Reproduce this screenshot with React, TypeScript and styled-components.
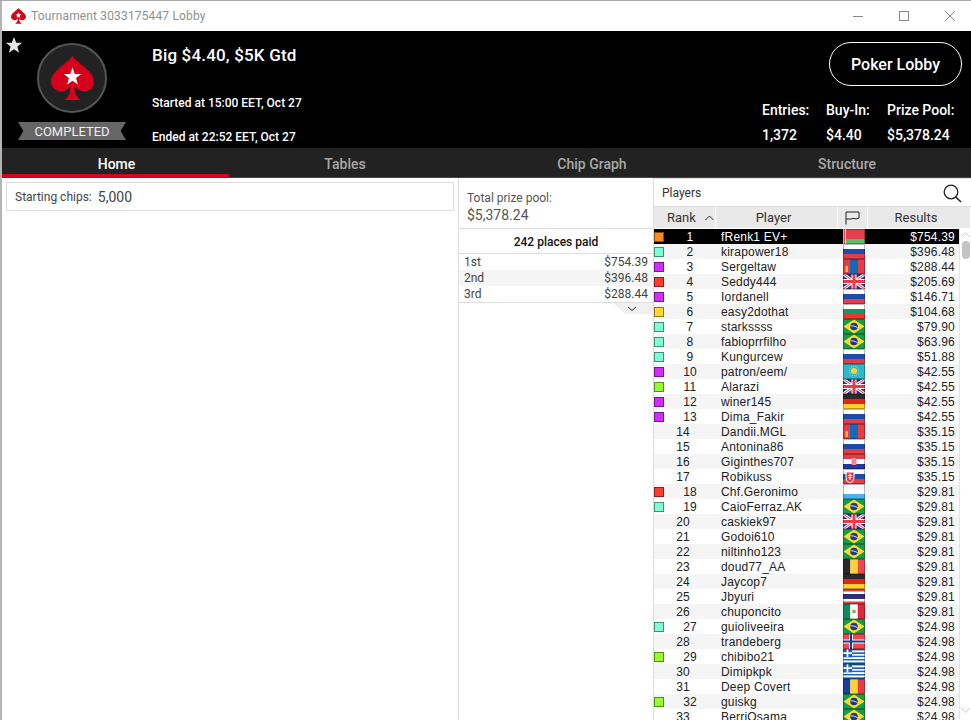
import React, {FC} from 'react';
import styled, {createGlobalStyle} from 'styled-components';

type FlagName = 'by' | 'ru' | 'mn' | 'gb' | 'bg' | 'br' | 'kz' | 'de' | 'hr' | 'sk' | 'ar' | 'be' | 'th' | 'mx' | 'no' | 'gr' | 'ro';

type PlayerType = {
    name: string
    prize: string
    flag: FlagName
    marker?: string
}

const AQUA = '#7fffd4';
const PURPLE = '#d22eff';
const RED = '#ff3b30';
const GREEN = '#98ff2e';
const ORANGE = '#ff8a1e';
const YELLOW = '#ffd633';

const players: PlayerType[] = [
    {name: 'fRenk1 EV+', prize: '$754.39', flag: 'by', marker: ORANGE},
    {name: 'kirapower18', prize: '$396.48', flag: 'ru', marker: AQUA},
    {name: 'Sergeltaw', prize: '$288.44', flag: 'mn', marker: PURPLE},
    {name: 'Seddy444', prize: '$205.69', flag: 'gb', marker: RED},
    {name: 'Iordanell', prize: '$146.71', flag: 'ru', marker: PURPLE},
    {name: 'easy2dothat', prize: '$104.68', flag: 'bg', marker: YELLOW},
    {name: 'starkssss', prize: '$79.90', flag: 'br', marker: AQUA},
    {name: 'fabioprrfilho', prize: '$63.96', flag: 'br', marker: AQUA},
    {name: 'Kungurcew', prize: '$51.88', flag: 'ru', marker: AQUA},
    {name: 'patron/eem/', prize: '$42.55', flag: 'kz', marker: PURPLE},
    {name: 'Alarazi', prize: '$42.55', flag: 'gb', marker: GREEN},
    {name: 'winer145', prize: '$42.55', flag: 'de', marker: PURPLE},
    {name: 'Dima_Fakir', prize: '$42.55', flag: 'ru', marker: PURPLE},
    {name: 'Dandii.MGL', prize: '$35.15', flag: 'mn'},
    {name: 'Antonina86', prize: '$35.15', flag: 'ru'},
    {name: 'Giginthes707', prize: '$35.15', flag: 'hr'},
    {name: 'Robikuss', prize: '$35.15', flag: 'sk'},
    {name: 'Chf.Geronimo', prize: '$29.81', flag: 'ar', marker: RED},
    {name: 'CaioFerraz.AK', prize: '$29.81', flag: 'br', marker: AQUA},
    {name: 'caskiek97', prize: '$29.81', flag: 'gb'},
    {name: 'Godoi610', prize: '$29.81', flag: 'br'},
    {name: 'niltinho123', prize: '$29.81', flag: 'br'},
    {name: 'doud77_AA', prize: '$29.81', flag: 'be'},
    {name: 'Jaycop7', prize: '$29.81', flag: 'de'},
    {name: 'Jbyuri', prize: '$29.81', flag: 'th'},
    {name: 'chuponcito', prize: '$29.81', flag: 'mx'},
    {name: 'guioliveeira', prize: '$24.98', flag: 'br', marker: AQUA},
    {name: 'trandeberg', prize: '$24.98', flag: 'no'},
    {name: 'chibibo21', prize: '$24.98', flag: 'gr', marker: GREEN},
    {name: 'Dimipkpk', prize: '$24.98', flag: 'gr'},
    {name: 'Deep Covert', prize: '$24.98', flag: 'ro'},
    {name: 'guiskg', prize: '$24.98', flag: 'br', marker: GREEN},
    {name: 'BerriOsama', prize: '$24.98', flag: 'br'},
];

const places = [
    {place: '1st', prize: '$754.39'},
    {place: '2nd', prize: '$396.48'},
    {place: '3rd', prize: '$288.44'},
];

const SPADE = 'M22 0C26 7 44 15 44 26C44 33 38 36 33 36C29 36 26 34 24 31C24 38 27 44 32 46L12 46C17 44 20 38 20 31C18 34 15 36 11 36C6 36 0 33 0 26C0 15 18 7 22 0Z';
const STAR = 'M22 11.500L24.200 18.300L31 18.400L25.600 22.600L27.500 29.200L22 25.400L16.500 29.200L18.400 22.600L13 18.400L19.800 18.300Z';

const Spade: FC<{size: number}> = ({size}) => (
    <svg width={size} height={size * 46 / 44} viewBox="0 0 44 46">
        <path d={SPADE} fill="#d6001c"/>
        <path d={STAR} fill="#fff"/>
    </svg>
);

const Stripes: FC<{colors: string[]}> = ({colors}) => {
    const h = 15 / colors.length;
    return <>{colors.map((c, i) => <rect key={i} x={0} y={i * h} width={22} height={h} fill={c}/>)}</>;
};

const flagArt: Record<FlagName, React.ReactNode> = {
    by: <>
        <Stripes colors={['#e53e4c', '#e53e4c', '#5cbf68']}/>
        <rect width={3} height={15} fill="#fff"/>
        <rect x={1} width={1} height={15} fill="#e53e4c"/>
    </>,
    ru: <Stripes colors={['#fff', '#1c4bab', '#e53c46']}/>,
    mn: <>
        <rect width={22} height={15} fill="#e53c46"/>
        <rect x={7} width={8} height={15} fill="#1668b8"/>
        <rect x={2.5} y={7} width={2.5} height={6} fill="#f5b73c"/>
    </>,
    gb: <>
        <rect width={22} height={15} fill="#26348f"/>
        <path d="M0 0L22 15M22 0L0 15" stroke="#fff" strokeWidth={3}/>
        <path d="M0 0L22 15M22 0L0 15" stroke="#e53c46" strokeWidth={1}/>
        <path d="M11 0V15M0 7.5H22" stroke="#fff" strokeWidth={5}/>
        <path d="M11 0V15M0 7.5H22" stroke="#e53c46" strokeWidth={3}/>
    </>,
    bg: <Stripes colors={['#fff', '#129a6c', '#e8392c']}/>,
    br: <>
        <rect width={22} height={15} fill="#169b46"/>
        <path d="M11 0.500L21.500 7.500L11 14.500L0.500 7.500Z" fill="#ffd92e"/>
        <circle cx={11} cy={7.5} r={3.8} fill="#1c3a8c"/>
        <path d="M7.400 6.800Q11 6.400 14.600 8.600" stroke="#fff" strokeWidth={0.8} fill="none"/>
    </>,
    kz: <>
        <rect width={22} height={15} fill="#2fb8d0"/>
        <circle cx={11} cy={7} r={3} fill="#f5d63c"/>
        <circle cx={11} cy={7} r={4.6} fill="none" stroke="#f5d63c" strokeWidth={1} strokeDasharray="1 1"/>
    </>,
    de: <Stripes colors={['#2a2a2a', '#e8221c', '#ffd22e']}/>,
    hr: <>
        <Stripes colors={['#e53c46', '#fff', '#22379c']}/>
        <rect x={8.5} y={4} width={5} height={7} rx={1} fill="#f08a94"/>
    </>,
    sk: <>
        <Stripes colors={['#fff', '#1c4bab', '#e53c46']}/>
        <path d="M3 3H11V9Q11 13 7 14Q3 13 3 9Z" fill="#e53c46" stroke="#fff"/>
        <path d="M7 4.5V11M5 6.5H9M5.5 8.5H8.500" stroke="#fff"/>
    </>,
    ar: <Stripes colors={['#f4f4f4', '#fff', '#4ab4ee']}/>,
    be: <>
        <rect width={7.400} height={15} fill="#2a2a2a"/>
        <rect x={7.400} width={7.300} height={15} fill="#ffd23c"/>
        <rect x={14.700} width={7.300} height={15} fill="#f04650"/>
    </>,
    th: <>
        <rect width={22} height={15} fill="#e53c46"/>
        <rect y={2.500} width={22} height={10} fill="#fff"/>
        <rect y={5} width={22} height={5} fill="#2c2f78"/>
    </>,
    mx: <>
        <rect width={7.400} height={15} fill="#128a5c"/>
        <rect x={7.400} width={7.300} height={15} fill="#fff"/>
        <rect x={14.700} width={7.300} height={15} fill="#e0263c"/>
        <circle cx={11} cy={7.500} r={2} fill="#b89a5c"/>
    </>,
    no: <>
        <rect width={22} height={15} fill="#f04650"/>
        <path d="M8 0V15M0 7.500H22" stroke="#fff" strokeWidth={4}/>
        <path d="M8 0V15M0 7.500H22" stroke="#1c3a8c" strokeWidth={2}/>
    </>,
    gr: <>
        <Stripes colors={['#1c62b8', '#fff', '#1c62b8', '#fff', '#1c62b8', '#fff', '#1c62b8', '#fff', '#1c62b8']}/>
        <rect width={9} height={8.300} fill="#1c62b8"/>
        <path d="M4.500 0V8.300M0 4.150H9" stroke="#fff" strokeWidth={1.700}/>
    </>,
    ro: <>
        <rect width={7.400} height={15} fill="#1c3f9c"/>
        <rect x={7.400} width={7.300} height={15} fill="#ffd23c"/>
        <rect x={14.700} width={7.300} height={15} fill="#e53c46"/>
    </>,
};

const Flag: FC<{name: FlagName}> = ({name}) => (
    <FlagSvg viewBox="0 0 22 15">
        {flagArt[name]}
        <rect x={0.5} y={0.5} width={21} height={14} fill="none" stroke="rgba(0,0,0,.28)"/>
    </FlagSvg>
);

const App: FC = () => {

    const playersMap = players.map((p, i) => (
        <Row key={i} $stripe={i % 2 === 1} $active={i === 0}>
            <RankCell>
                {p.marker && <Marker $color={p.marker}/>}
                <RankNumber $marked={!!p.marker}>{i + 1}</RankNumber>
            </RankCell>
            <PlayerCell>{p.name}</PlayerCell>
            <FlagCell><Flag name={p.flag}/></FlagCell>
            <ResultCell>{p.prize}</ResultCell>
        </Row>
    ));

    return (
        <Window>
            <GlobalStyle/>
            <TitleBar>
                <Spade size={15}/>
                <WindowTitle>Tournament 3033175447 Lobby</WindowTitle>
                <WindowButtons>
                    <svg width="12" height="12" viewBox="0 0 12 12">
                        <path d="M1 6.500H11" stroke="#888"/>
                    </svg>
                    <svg width="12" height="12" viewBox="0 0 12 12">
                        <rect x="1.500" y="1.500" width="9" height="9" fill="none" stroke="#888"/>
                    </svg>
                    <svg width="12" height="12" viewBox="0 0 12 12">
                        <path d="M1 1L11 11M11 1L1 11" stroke="#888"/>
                    </svg>
                </WindowButtons>
            </TitleBar>

            <Header>
                <FavouriteStar viewBox="0 0 20 20">
                    <path d="M10 1L12.400 7.400L19 7.600L13.800 11.800L15.600 18.500L10 14.700L4.400 18.500L6.200 11.800L1 7.600L7.600 7.400Z" fill="#e6e6e6"/>
                </FavouriteStar>
                <LogoColumn>
                    <LogoCircle><Spade size={43}/></LogoCircle>
                    <Ribbon>COMPLETED</Ribbon>
                </LogoColumn>
                <TitleColumn>
                    <TournamentName>Big $4.40, $5K Gtd</TournamentName>
                    <DateLine>Started at 15:00 EET, Oct 27</DateLine>
                    <DateLine>Ended at 22:52 EET, Oct 27</DateLine>
                </TitleColumn>
                <SummaryColumn>
                    <LobbyButton>Poker Lobby</LobbyButton>
                    <Stats>
                        <span>Entries:</span>
                        <span>Buy-In:</span>
                        <span>Prize Pool:</span>
                        <span>1,372</span>
                        <span>$4.40</span>
                        <span>$5,378.24</span>
                    </Stats>
                </SummaryColumn>
            </Header>

            <Tabs>
                <Tab $active>Home</Tab>
                <Tab>Tables</Tab>
                <Tab>Chip Graph</Tab>
                <Tab>Structure</Tab>
            </Tabs>

            <Content>
                <InfoPanel>
                    <ChipsBox>Starting chips:<ChipsValue>5,000</ChipsValue></ChipsBox>
                </InfoPanel>

                <PrizePanel>
                    <PoolBox>
                        <PoolLabel>Total prize pool:</PoolLabel>
                        <PoolValue>$5,378.24</PoolValue>
                    </PoolBox>
                    <PlacesTitle>242 places paid</PlacesTitle>
                    <PlacesList>
                        {places.map((p, i) => (
                            <PlaceRow key={i} $stripe={i === 1}>
                                <span>{p.place}</span>
                                <span>{p.prize}</span>
                            </PlaceRow>
                        ))}
                    </PlacesList>
                    <ExpandTab>
                        <svg width="10" height="6" viewBox="0 0 10 6">
                            <path d="M1 1L5 4.500L9 1" stroke="#222" fill="none"/>
                        </svg>
                    </ExpandTab>
                </PrizePanel>

                <PlayersPanel>
                    <SearchBar>
                        Players
                        <svg width="19" height="19" viewBox="0 0 19 19">
                            <circle cx="8" cy="8" r="6.800" fill="none" stroke="#222" strokeWidth="1.300"/>
                            <path d="M12.800 13L18 18" stroke="#222" strokeWidth="1.500"/>
                        </svg>
                    </SearchBar>
                    <ColumnHeader>
                        <RankHeader>
                            Rank
                            <svg width="9" height="6" viewBox="0 0 9 6">
                                <path d="M0.500 5L4.500 1L8.500 5" stroke="#333" fill="none"/>
                            </svg>
                        </RankHeader>
                        <HeaderCell $shift={6}>Player</HeaderCell>
                        <HeaderCell>
                            <svg width="15" height="14" viewBox="0 0 15 14">
                                <path d="M1 13.500V1H14V7C11 9 9 6.500 6 8H1" stroke="#222" fill="none"/>
                            </svg>
                        </HeaderCell>
                        <HeaderCell $shift={6}>Results</HeaderCell>
                    </ColumnHeader>
                    <ListArea>
                        <Rows>{playersMap}</Rows>
                        <ScrollTrack>
                            <svg width="11" height="8" viewBox="0 0 11 8">
                                <path d="M1 6L5.500 1.500L10 6" stroke="#ccc" fill="none"/>
                            </svg>
                            <ScrollThumb/>
                            <ScrollSpacer/>
                            <svg width="11" height="8" viewBox="0 0 11 8">
                                <path d="M1 2L5.500 6.500L10 2" stroke="#ccc" fill="none"/>
                            </svg>
                        </ScrollTrack>
                    </ListArea>
                </PlayersPanel>
            </Content>
        </Window>
    );
};

export default App;

const GlobalStyle = createGlobalStyle`
  html, body {
    margin: 0;
    height: 720px;
    overflow: hidden;
    background: #fff;
  }
  * {
    box-sizing: border-box;
  }
`

const Window = styled.div`
  width: 971px;
  height: 720px;
  display: flex;
  flex-direction: column;
  overflow: hidden;
  border-top: 1px solid #a9a9a9;
  border-left: 2px solid #b4b4b4;
  background: #fff;
  font-family: Roboto, "Liberation Sans", sans-serif;
`

const TitleBar = styled.div`
  height: 30px;
  flex: none;
  display: flex;
  align-items: center;
  gap: 5px;
  padding-left: 9px;
  background: #fff;
`

const WindowTitle = styled.div`
  font-size: 12px;
  color: #8f8f8f;
  letter-spacing: .15px;
`

const WindowButtons = styled.div`
  margin-left: auto;
  display: flex;
  align-items: center;
  gap: 34px;
  padding-right: 15px;
`

const Header = styled.div`
  position: relative;
  height: 117px;
  flex: none;
  display: flex;
  background: #000;
  color: #fff;
`

const FavouriteStar = styled.svg`
  position: absolute;
  left: 3px;
  top: 5px;
  width: 18px;
  height: 18px;
`

const LogoColumn = styled.div`
  width: 150px;
  flex: none;
  padding: 12px 26px 0 16px;
  display: flex;
  flex-direction: column;
  align-items: center;
  gap: 9px;
`

const LogoCircle = styled.div`
  width: 70px;
  height: 70px;
  flex: none;
  border-radius: 50%;
  background: #222;
  border: 2px solid #555;
  display: flex;
  align-items: center;
  justify-content: center;
`

const Ribbon = styled.div`
  width: 108px;
  height: 18px;
  flex: none;
  background: #666;
  clip-path: polygon(0 0, 100% 0, 95% 50%, 100% 100%, 0 100%, 5% 50%);
  font-size: 13px;
  font-weight: 400;
  line-height: 19px;
  text-align: center;
  color: #f0f0f0;
`

const TitleColumn = styled.div`
  flex: 1;
  padding-top: 14px;
  display: flex;
  flex-direction: column;
`

const TournamentName = styled.div`
  font-size: 17px;
  font-weight: 500;
  line-height: 20px;
  letter-spacing: .17px;
  margin-bottom: 30px;
`

const DateLine = styled.div`
  font-size: 12px;
  font-weight: 500;
  line-height: 16px;
  margin-bottom: 18px;
`

const SummaryColumn = styled.div`
  width: 210px;
  flex: none;
  padding: 11px 9px 0 0;
  display: flex;
  flex-direction: column;
  align-items: flex-end;
`

const LobbyButton = styled.button`
  width: 133px;
  height: 44px;
  flex: none;
  padding: 0;
  border: 1px solid #fff;
  border-radius: 22px;
  background: transparent;
  color: #fff;
  font-family: inherit;
  font-size: 16px;
  font-weight: 500;
`

const Stats = styled.div`
  margin: 11px 8px 0 0;
  width: 192px;
  display: grid;
  grid-template-columns: 64px 61px 67px;
  grid-auto-rows: 25px;
  align-items: center;
  font-size: 14px;
  font-weight: 500;
  white-space: nowrap;
`

const Tabs = styled.div`
  height: 30px;
  flex: none;
  display: grid;
  grid-template-columns: 227px 232px 262px 248px;
  background: #222;
  border-bottom: 1px solid #444;
`

const Tab = styled.div<{$active?: boolean}>`
  display: flex;
  align-items: center;
  justify-content: center;
  padding: ${p => p.$active ? '5px 0 0 2px' : '2px 0 0'};
  font-size: 14px;
  font-weight: 500;
  color: ${p => p.$active ? '#fff' : '#a8a8a8'};
  border-bottom: ${p => p.$active ? '3px solid #d6001c' : 'none'};
`

const Content = styled.div`
  flex: 1;
  min-height: 0;
  display: flex;
`

const InfoPanel = styled.div`
  width: 456px;
  flex: none;
  padding: 4px;
`

const ChipsBox = styled.div`
  height: 29px;
  padding-left: 8px;
  display: flex;
  align-items: center;
  border: 1px solid #ddd;
  font-size: 12px;
  color: #444;
`

const ChipsValue = styled.span`
  margin-left: 6px;
  font-size: 14px;
`

const PrizePanel = styled.div`
  position: relative;
  width: 196px;
  flex: none;
  border-left: 1px solid #ddd;
  border-right: 1px solid #ddd;
`

const PoolBox = styled.div`
  height: 51px;
  padding: 12px 0 0 8px;
  border-bottom: 1px solid #ddd;
  color: #555;
`

const PoolLabel = styled.div`
  font-size: 12px;
  line-height: 16px;
`

const PoolValue = styled.div`
  font-size: 14px;
  line-height: 18px;
`

const PlacesTitle = styled.div`
  height: 25px;
  display: flex;
  align-items: center;
  justify-content: center;
  padding-top: 1px;
  border-bottom: 1px solid #ddd;
  font-size: 12px;
  font-weight: 500;
  color: #111;
`

const PlacesList = styled.div`
  border-bottom: 1px solid #ddd;
`

const PlaceRow = styled.div<{$stripe?: boolean}>`
  height: 16px;
  display: flex;
  align-items: center;
  justify-content: space-between;
  padding: 0 5px;
  background: ${p => p.$stripe ? '#f5f5f5' : '#fff'};
  font-size: 12px;
  color: #444;
`

const ExpandTab = styled.div`
  position: absolute;
  right: 0;
  top: 125px;
  width: 40px;
  height: 11px;
  display: flex;
  align-items: center;
  justify-content: center;
  padding-right: 3px;
  background: #f0f0f0;
  clip-path: polygon(0 0, 100% 0, 100% 100%, 30% 100%);
`

const PlayersPanel = styled.div`
  flex: 1;
  min-width: 0;
  display: flex;
  flex-direction: column;
`

const SearchBar = styled.div`
  height: 29px;
  flex: none;
  display: flex;
  align-items: center;
  justify-content: space-between;
  padding: 1px 9px 0 8px;
  font-size: 12px;
  color: #333;
  border-top: 1px solid #ddd;
  border-bottom: 1px solid #ddd;
`

const ColumnHeader = styled.div`
  height: 21px;
  flex: none;
  display: grid;
  grid-template-columns: 62px 122px 30px 103px;
  background: #e9e9e9;
`

const HeaderCell = styled.div<{$shift?: number}>`
  display: flex;
  align-items: center;
  justify-content: center;
  padding-right: ${p => p.$shift ?? 0}px;
  border-right: 1px solid #fff;
  font-size: 13px;
  color: #333;
`

const RankHeader = styled(HeaderCell)`
  justify-content: flex-start;
  gap: 9px;
  padding-left: 13px;
`

const ListArea = styled.div`
  flex: 1;
  min-height: 0;
  display: flex;
  padding-top: 1px;
`

const Rows = styled.div`
  width: 305px;
  flex: none;
  overflow: hidden;
`

const Row = styled.div<{$stripe?: boolean, $active?: boolean}>`
  height: 15px;
  display: grid;
  grid-template-columns: 62px 122px 30px 91px;
  align-items: center;
  background: ${p => p.$active ? '#000' : p.$stripe ? '#f5f5f5' : '#fff'};
  color: ${p => p.$active ? '#fff' : '#222'};
  font-family: "Liberation Sans", Arial, sans-serif;
  font-size: 12px;
  letter-spacing: .2px;
`

const RankCell = styled.div`
  display: flex;
  align-items: center;
`

const Marker = styled.div<{$color: string}>`
  width: 10px;
  height: 10px;
  flex: none;
  background: ${p => p.$color};
  border: 1px solid rgba(0, 0, 0, .45);
`

const RankNumber = styled.div<{$marked: boolean}>`
  flex: 1;
  text-align: center;
  padding-right: ${p => p.$marked ? 0 : 4}px;
`

const PlayerCell = styled.div`
  padding-left: 5px;
  white-space: nowrap;
`

const FlagCell = styled.div`
  height: 15px;
  padding-left: 5px;
`

const FlagSvg = styled.svg`
  display: block;
  width: 22px;
  height: 15px;
`

const ResultCell = styled.div`
  text-align: right;
  padding-right: 4px;
`

const ScrollTrack = styled.div`
  flex: 1;
  display: flex;
  flex-direction: column;
  align-items: center;
  border-left: 1px solid #e4e4e4;
  padding: 3px 0 6px;
  margin-top: -1px;
`

const ScrollThumb = styled.div`
  width: 8px;
  height: 18px;
  margin-top: 2px;
  border-radius: 4px;
  background: #c4c4c4;
`

const ScrollSpacer = styled.div`
  flex: 1;
`
